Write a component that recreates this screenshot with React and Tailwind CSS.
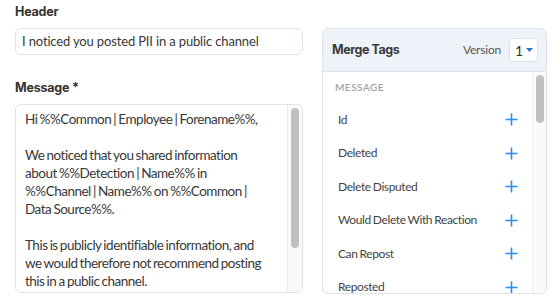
const tags = [
  "Id",
  "Deleted",
  "Delete Disputed",
  "Would Delete With Reaction",
  "Can Repost",
  "Reposted",
];

const message = [
  "Hi %%Common | Employee | Forename%%,",
  "",
  "We noticed that you shared information",
  "about %%Detection | Name%% in",
  "%%Channel | Name%% on %%Common |",
  "Data Source%%.",
  "",
  "This is publicly identifiable information, and",
  "we would therefore not recommend posting",
  "this in a public channel.",
];

export default function App() {
  return (
    <div className="w-[560px] h-[306px] bg-white flex gap-[19px] pl-[15px] pt-[4px] font-['Lato',sans-serif] text-[#383838] overflow-hidden">
      <div className="w-[288px] flex flex-col">
        <div className="text-[12.5px] leading-[16px] font-bold text-[#333] font-['Inter',sans-serif] tracking-[-0.2px]">Header</div>
        <div className="mt-[8px] h-[27px] border border-[#dfe2e6] rounded-md flex items-center px-[6px] text-[13px] tracking-[-0.15px]">
          I noticed you posted PII in a public channel
        </div>
        <div className="mt-[25px] text-[12.5px] leading-[16px] font-bold text-[#333] font-['Inter',sans-serif] tracking-[-0.2px]">Message *</div>
        <div className="mt-[8px] h-[189px] border border-[#dfe2e6] rounded-md flex overflow-hidden">
          <div className="flex-1 pl-[9px] pt-[5px] text-[13.5px] leading-[18px] tracking-[-0.5px] [word-spacing:-0.8px] overflow-hidden">
            {message.map((l, i) => (
              <div key={i} className="h-[18px] whitespace-nowrap">{l}</div>
            ))}
          </div>
          <div className="w-[15px] shrink-0 bg-[#fafafa] border-l border-[#ececec] pt-[3px] flex justify-center">
            <div className="w-[8px] h-[140px] rounded-full bg-[#c1c1c1]" />
          </div>
        </div>
      </div>

      <div className="w-[225px] mt-[24px] h-[266px] border border-[#dfe2e6] rounded-md flex flex-col overflow-hidden">
        <div className="h-[43px] shrink-0 bg-[#eef3f9] border-b border-[#dfe2e6] flex items-center pl-[9px] pr-[8px]">
          <div className="flex-1 text-[12.5px] font-bold text-[#3a3a3a] font-['Inter',sans-serif] tracking-[-0.45px]">Merge Tags</div>
          <div className="text-[12px] text-[#555] mr-[8px] tracking-[-0.2px]">Version</div>
          <div className="w-[29px] h-[24px] bg-white border border-[#dfe2e6] rounded flex items-center justify-end pr-[4px] gap-[3px]">
            <span className="text-[14px] text-[#333]">1</span>
            <svg width="7" height="4" viewBox="0 0 7 4"><path d="M0 0h7L3.5 4z" fill="#2a6fd1" /></svg>
          </div>
        </div>
        <div className="flex flex-1 min-h-0 overflow-hidden">
          <div className="flex-1 flex flex-col">
            <div className="h-[31px] shrink-0 pt-[10px] pl-[12px] text-[10px] leading-[10px] tracking-[0.5px] text-[#a0a4a8] font-semibold">MESSAGE</div>
            {tags.map((t) => (
              <div key={t} className="h-[33.5px] shrink-0 flex items-center pl-[15px] pr-[14px]">
                <span className="flex-1 text-[12px] text-[#444] tracking-[-0.4px] [word-spacing:-0.6px]">{t}</span>
                <svg width="13" height="13" viewBox="0 0 13 13" className="shrink-0">
                  <path d="M6.5 0.5v12M0.5 6.5h12" stroke="#2b8cf0" strokeWidth="1.6" />
                </svg>
              </div>
            ))}
          </div>
          <div className="w-[14px] shrink-0 bg-[#fafafa] border-l border-[#ececec] pt-[3px] flex justify-center">
            <div className="w-[8px] h-[48px] rounded-full bg-[#c1c1c1]" />
          </div>
        </div>
      </div>
    </div>
  );
}
